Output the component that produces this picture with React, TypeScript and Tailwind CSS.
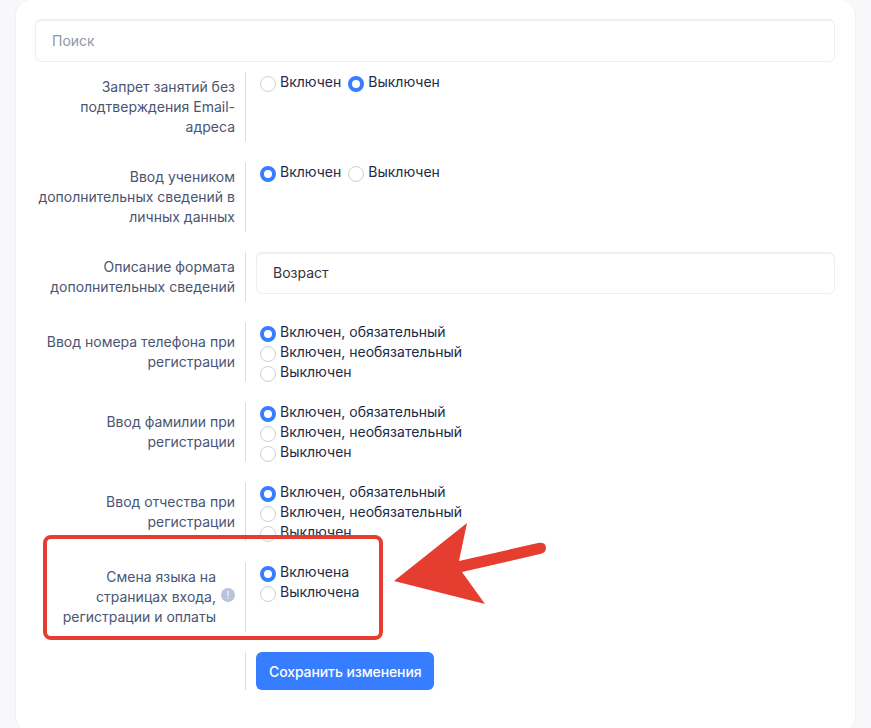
import type { ReactNode } from 'react';

/** Одна радиокнопка: синий кружок с белой серединой, когда выбрана. */
function Radio({ label, checked = false }: { label: string; checked?: boolean }) {
  return (
    <span className="inline-flex h-5 items-start text-[14px] leading-5 text-[#212b4b]">
      <span
        className={
          checked
            ? 'mt-1 mr-1 h-4 w-4 shrink-0 rounded-full border-[4.5px] border-[#377dff] bg-white'
            : 'mt-1 mr-1 h-4 w-4 shrink-0 rounded-full border border-[#cfd1d4] bg-white'
        }
      />
      {label}
    </span>
  );
}

/** Строка формы: подпись справа, вертикальный разделитель, значение. */
function Row({
  label,
  height,
  labelTop = 'pt-[5px]',
  children,
}: {
  label?: ReactNode;
  height: string;
  labelTop?: string;
  children: ReactNode;
}) {
  return (
    <div className={`flex ${height}`}>
      <div className={`relative w-[200px] text-right text-[14px] leading-5 text-[#4a5573] ${labelTop}`}>{label}</div>
      <div className="mx-[10px] w-px bg-[#dcdee2]" />
      <div className="min-w-0 flex-1">{children}</div>
    </div>
  );
}

function ThreeOptions() {
  return (
    <div className="flex flex-col pl-1">
      <Radio label="Включен, обязательный" checked />
      <Radio label="Включен, необязательный" />
      <Radio label="Выключен" />
    </div>
  );
}

export default function App() {
  return (
    <div className="relative h-[728px] overflow-hidden bg-[#f8f8fb] font-['Inter',sans-serif]">
      <div className="mx-[15px] h-[732px] rounded-[16px] border-x border-[#f0f0f4] bg-white pt-[19px] pr-5 pl-[19px]">
        <div className="flex h-[43px] items-center rounded-md border border-t-2 border-[#eeeef3] pb-[2px] pl-4 text-[14px] text-[#8f96a6]">
          Поиск
        </div>

        <div className="mt-[10px] flex flex-col gap-5">
          <Row label="Запрет занятий без подтверждения Email-адреса" height="h-[70px]">
            <div className="flex gap-[7px] pl-1">
              <Radio label="Включен" />
              <Radio label="Выключен" checked />
            </div>
          </Row>
          <Row label="Ввод учеником дополнительных сведений в личных данных" height="h-[70px]">
            <div className="flex gap-[7px] pl-1">
              <Radio label="Включен" checked />
              <Radio label="Выключен" />
            </div>
          </Row>
          <Row label="Описание формата дополнительных сведений" height="h-[50px]">
            <div className="flex h-[42px] items-center rounded-md border border-t-2 border-[#eeeef3] pb-[2px] pl-4 text-[14px] text-[#33343a]">
              Возраст
            </div>
          </Row>
          <Row label="Ввод номера телефона при регистрации" height="h-[60px]" labelTop="pt-[10px]">
            <ThreeOptions />
          </Row>
          <Row label="Ввод фамилии при регистрации" height="h-[60px]" labelTop="pt-[10px]">
            <ThreeOptions />
          </Row>
          <Row label="Ввод отчества при регистрации" height="h-[60px]" labelTop="pt-[10px]">
            <ThreeOptions />
          </Row>
          <Row
            height="h-[70px]"
            label={
              <>
                <div className="pr-[19px]">Смена языка на страницах входа, регистрации и оплаты</div>
                <span className="absolute top-[26px] right-0 flex h-[14px] w-[14px] items-center justify-center rounded-full bg-[#b9c3da] text-[10px] leading-none font-bold text-[#e4e8f1]">
                  !
                </span>
              </>
            }
          >
            <div className="flex flex-col pl-1">
              <Radio label="Включена" checked />
              <Radio label="Выключена" />
            </div>
          </Row>
          <Row height="h-[38px]">
            <button className="h-[38px] rounded-md bg-[#377dff] pr-3 pl-[13px] text-[14px] font-medium tracking-[-0.1px] text-white">
              Сохранить изменения
            </button>
          </Row>
        </div>
      </div>

      {/* аннотация поверх скриншота */}
      <div className="absolute top-[535px] left-[43px] h-[105px] w-[340px] rounded-lg border-[4.5px] border-[#e53e30]" />
      <svg className="absolute top-0 left-0" width="871" height="728" viewBox="0 0 871 728" fill="none">
        <path
          d="M394 581 L467 523 L459 561 L538 543 Q546 542 546 548 Q546 553 540 554 L462 572 L485 604 Z"
          fill="#e53e30"
        />
      </svg>
    </div>
  );
}
